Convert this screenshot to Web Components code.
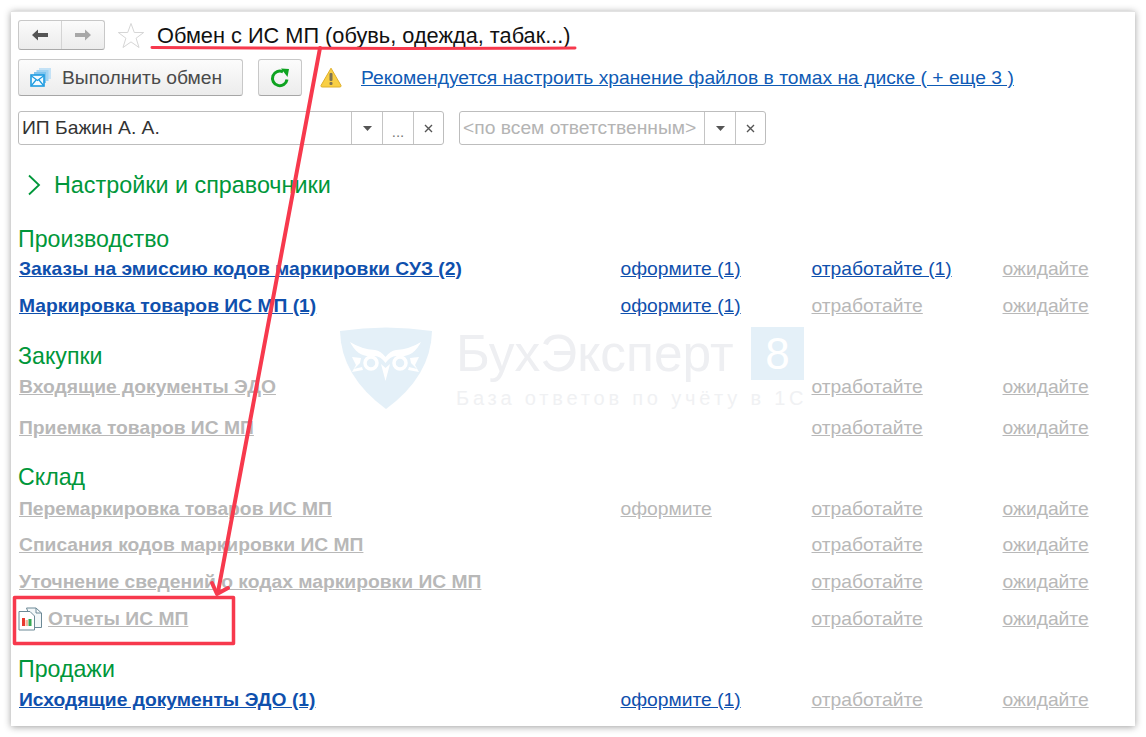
<!DOCTYPE html>
<html lang="ru">
<head>
<meta charset="utf-8">
<title>Обмен с ИС МП</title>
<style>
    html, body { margin: 0; background: #fff; }
    body { width: 1146px; height: 737px; overflow: hidden; font-family: "Liberation Sans", Arial, sans-serif; }
</style>
</head>
<body>
<app-panel>
    <head-bar></head-bar>
    <action-bar></action-bar>
    <filter-bar></filter-bar>
    <group-toggle>Настройки и справочники</group-toggle>

    <section-head gap="30">Производство</section-head>
    <doc-row name="Заказы на эмиссию кодов маркировки СУЗ (2)" on a="оформите (1)" b="отработайте (1)"></doc-row>
    <doc-row gap="1" name="Маркировка товаров ИС МП (1)" on a="оформите (1)" b="отработайте" b-off></doc-row>

    <section-head gap="20">Закупки</section-head>
    <doc-row gap="1" name="Входящие документы ЭДО" b="отработайте" b-off></doc-row>
    <doc-row gap="5" name="Приемка товаров ИС МП" b="отработайте" b-off></doc-row>

    <section-head gap="19">Склад</section-head>
    <doc-row gap="2" name="Перемаркировка товаров ИС МП" a="оформите" a-off b="отработайте" b-off></doc-row>
    <doc-row name="Списания кодов маркировки ИС МП" b="отработайте" b-off></doc-row>
    <doc-row gap="1" name="Уточнение сведений о кодах маркировки ИС МП" b="отработайте" b-off></doc-row>
    <doc-row gap="1" icon name="Отчеты ИС МП" b="отработайте" b-off></doc-row>

    <section-head gap="20">Продажи</section-head>
    <doc-row gap="1" name="Исходящие документы ЭДО (1)" on a="оформите (1)" b="отработайте" b-off></doc-row>

    <water-mark></water-mark>
    <note-layer></note-layer>
</app-panel>

<script>
class AppPanel extends HTMLElement {
    constructor() {
        super();
        this.attachShadow({ mode: 'open' });
        this.shadowRoot.innerHTML = `
            <style>
                :host {
                    display: block;
                    position: relative;
                    box-sizing: border-box;
                    width: 1124px;
                    height: 715px;
                    margin: 11px 0 0 11px;
                    padding: 8px 7px 0 7px;
                    background: #fff;
                    border-top: 1px solid #e2e2e2;
                    box-shadow: 0 1px 7px rgba(0,0,0,0.38);
                }
            </style>
            <slot></slot>
        `;
    }
}

class HeadBar extends HTMLElement {
    constructor() {
        super();
        this.attachShadow({ mode: 'open' });
        this.shadowRoot.innerHTML = `
            <style>
                :host { display: flex; align-items: center; height: 30px; }
                #nav {
                    display: flex;
                    box-sizing: border-box;
                    width: 87px;
                    height: 30px;
                    border: 1px solid #c8c8c8;
                    border-bottom-color: #a9a9a9;
                    border-radius: 3px;
                    background: linear-gradient(#fbfbfb, #ececec);
                }
                #nav div { flex: 1; display: flex; align-items: center; justify-content: center; }
                #nav div + div { border-left: 1px solid #d4d4d4; }
                #star { margin: 2px 0 0 12px; display: block; }
                h1 {
                    margin: 2px 0 0 12px;
                    font: 400 21.750px "Liberation Sans", Arial, sans-serif;
                    color: #111;
                    white-space: nowrap;
                }
            </style>
            <div id="nav">
                <div><svg width="18" height="14" viewBox="0 0 18 14"><path d="M1 7l6-5.500v3.500h10v4H7v3.500z" fill="#555"/></svg></div>
                <div><svg width="18" height="14" viewBox="0 0 18 14"><path d="M17 7l-6-5.500v3.500H1v4h10v3.500z" fill="#a8a8a8"/></svg></div>
            </div>
            <svg id="star" width="28" height="28" viewBox="0 0 28 28"><path d="M14 1.500l3.300 9h9.400l-7.600 5.700 2.900 9.300-8-5.600-8 5.600 2.900-9.300-7.600-5.700h9.400z" fill="#fff" stroke="#d6d6d6"/></svg>
            <h1>Обмен с ИС МП (обувь, одежда, табак...)</h1>
        `;
    }
}

class ActionBar extends HTMLElement {
    constructor() {
        super();
        this.attachShadow({ mode: 'open' });
        this.shadowRoot.innerHTML = `
            <style>
                :host { display: flex; align-items: center; height: 37px; margin-top: 9px; }
                button {
                    display: flex;
                    align-items: center;
                    box-sizing: border-box;
                    height: 37px;
                    padding: 0;
                    border: 1px solid #c8c8c8;
                    border-bottom-color: #a6a6a6;
                    border-radius: 3px;
                    background: linear-gradient(#fcfcfc, #ececec);
                    font: 19.270px "Liberation Sans", Arial, sans-serif;
                    color: #4a4a4a;
                }
                #run { width: 225px; padding-left: 11px; }
                #run span { margin-left: 11px; }
                #refresh { width: 44px; margin-left: 15px; justify-content: center; }
                #warn { margin-left: 18px; display: block; }
                a { margin-left: 19px; font-size: 19.270px; color: #0f5bb5; text-decoration: underline; white-space: nowrap; }
            </style>
            <button id="run">
                <svg width="21" height="19" viewBox="0 0 21 19">
                    <rect x="9" y="0" width="12" height="11" fill="#c4e2f6"/>
                    <rect x="6.500" y="2" width="12" height="11" fill="#a2d4f3"/>
                    <rect x="4" y="4" width="12" height="11" fill="#7fc4ee"/>
                    <rect x="1" y="7" width="13" height="11" fill="#f4fbff" stroke="#1d9be0" stroke-width="1.600"/>
                    <path d="M1.500 8l6 4.500 6-4.500M1.500 17.500l4.500-5.500M13.500 17.500l-4.500-5.500" fill="none" stroke="#1d9be0" stroke-width="1.200"/>
                </svg>
                <span>Выполнить обмен</span>
            </button>
            <button id="refresh">
                <svg width="20" height="20" viewBox="0 0 20 20">
                    <path d="M17 11.500A7.300 7.300 0 1 1 13 3.800" fill="none" stroke="#0ea320" stroke-width="3"/>
                    <path d="M11 0.500l8 0.500-1.500 8z" fill="#0ea320"/>
                </svg>
            </button>
            <svg id="warn" width="22" height="21" viewBox="0 0 22 21">
                <path d="M11 1.200L21 18.500q.4 1.500-1.200 1.500H2.200q-1.600 0-1.200-1.500z" fill="#f8cf45" stroke="#e0b02a" stroke-linejoin="round"/>
                <rect x="9.500" y="6" width="3" height="8" rx="1" fill="#7d7355"/>
                <rect x="9.500" y="15" width="3" height="3" rx="1" fill="#7d7355"/>
            </svg>
            <a>Рекомендуется настроить хранение файлов в томах на диске ( + еще 3 )</a>
        `;
    }
}

class FilterBar extends HTMLElement {
    constructor() {
        super();
        this.attachShadow({ mode: 'open' });
        this.shadowRoot.innerHTML = `
            <style>
                :host { display: flex; gap: 15px; margin-top: 15px; }
            </style>
            <combo-field style="width:426px" value="ИП Бажин А. А." more></combo-field>
            <combo-field style="width:307px" value="&lt;по всем ответственным&gt;" empty></combo-field>
        `;
    }
}

class ComboField extends HTMLElement {
    constructor() {
        super();
        this.attachShadow({ mode: 'open' });
        const more = this.hasAttribute('more') ? `<div class="btn dots">...</div>` : '';
        this.shadowRoot.innerHTML = `
            <style>
                :host {
                    display: flex;
                    box-sizing: border-box;
                    height: 34px;
                    border: 1px solid #bdbdbd;
                    border-radius: 3px;
                    background: #fff;
                    font-size: 19.270px;
                    color: #333;
                }
                #val { flex: 1; min-width: 0; padding-left: 3px; line-height: 32px; white-space: nowrap; overflow: hidden; }
                :host([empty]) #val { color: #b4b4b4; }
                .btn {
                    box-sizing: border-box;
                    width: 31px;
                    border-left: 1px solid #c4c4c4;
                    display: flex;
                    align-items: center;
                    justify-content: center;
                    color: #777;
                }
                .btn:last-child { width: 30px; }
                .dots { font-size: 15px; padding-top: 7px; }
            </style>
            <div id="val"></div>
            <div class="btn"><svg width="9" height="5" viewBox="0 0 9 5"><path d="M0 0h9L4.500 5z" fill="#555"/></svg></div>
            ${more}
            <div class="btn"><svg width="9" height="9" viewBox="0 0 9 9"><path d="M1 1l7 7M8 1L1 8" stroke="#555" stroke-width="1.400"/></svg></div>
        `;
        this.shadowRoot.querySelector('#val').textContent = this.getAttribute('value');
    }
}

class GroupToggle extends HTMLElement {
    constructor() {
        super();
        this.attachShadow({ mode: 'open' });
        this.shadowRoot.innerHTML = `
            <style>
                :host {
                    display: flex;
                    align-items: center;
                    height: 24px;
                    margin-top: 28px;
                    padding-left: 9px;
                    font-size: 23.350px;
                    color: #00973a;
                }
                svg { margin-right: 13px; display: block; }
            </style>
            <svg width="14" height="22" viewBox="0 0 14 22"><path d="M2 1.500L12 11 2 20.500" fill="none" stroke="#00973a" stroke-width="1.800"/></svg>
            <slot></slot>
        `;
    }
}

class SectionHead extends HTMLElement {
    constructor() {
        super();
        this.attachShadow({ mode: 'open' });
        const gap = this.getAttribute('gap') || 0;
        this.shadowRoot.innerHTML = `
            <style>
                :host {
                    display: block;
                    height: 24px;
                    margin-top: ${gap}px;
                    font-size: 23.200px;
                    line-height: 24px;
                    color: #00973a;
                }
            </style>
            <slot></slot>
        `;
    }
}

class DocRow extends HTMLElement {
    constructor() {
        super();
        this.attachShadow({ mode: 'open' });
        const att = n => this.getAttribute(n);
        const icon = this.hasAttribute('icon') ? `
            <svg width="24" height="24" viewBox="0 0 24 24">
                <path d="M8.500 1h9.500l5.500 5v14.500H16z" fill="#f3f7f9" stroke="#6c8996"/>
                <path d="M18 1v5h5.500" fill="none" stroke="#6c8996"/>
                <path d="M1 4.500h11l4.500 4.500v14H1z" fill="#fff" stroke="#6c8996"/>
                <rect x="4" y="11" width="3" height="8" fill="#e8392e"/>
                <rect x="7.500" y="13" width="2.500" height="6" fill="#f4b9a0"/>
                <rect x="10.500" y="12" width="3" height="7" fill="#34a853"/>
            </svg>` : '';
        this.shadowRoot.innerHTML = `
            <style>
                :host {
                    display: grid;
                    grid-template-columns: 601.500px 191px 191px auto;
                    align-items: center;
                    height: 36px;
                    margin-top: ${att('gap') || 0}px;
                    padding-left: 1px;
                    font-size: 19.270px;
                    color: #b8b8b8;
                    white-space: nowrap;
                }
                #name { display: flex; align-items: center; font-weight: 700; }
                #name svg { margin: 0 6px 0 -1px; }
                a { text-decoration: underline; }
                .on { color: #0f50ad; }
                .off { color: #b8b8b8; }
            </style>
            <div id="name">${icon}<a class="${this.hasAttribute('on') ? 'on' : 'off'}">${att('name')}</a></div>
            <div><a class="${this.hasAttribute('a-off') ? 'off' : 'on'}">${att('a') || ''}</a></div>
            <div><a class="${this.hasAttribute('b-off') ? 'off' : 'on'}">${att('b') || ''}</a></div>
            <div><a class="off">ожидайте</a></div>
        `;
    }
}

class WaterMark extends HTMLElement {
    constructor() {
        super();
        this.attachShadow({ mode: 'open' });
        this.shadowRoot.innerHTML = `
            <style>
                :host {
                    position: absolute;
                    left: 328px;
                    top: 314px;
                    width: 470px;
                    height: 86px;
                    pointer-events: none;
                }
                svg { position: absolute; left: 0; top: 0; }
                #t1 { position: absolute; left: 117px; top: 1px; font-size: 51.500px; line-height: 52px; color: #eeeff2; white-space: nowrap; }
                #t2 { position: absolute; left: 117px; top: 60px; font-size: 20px; line-height: 24px; letter-spacing: 3.800px; color: #f0f1f3; white-space: nowrap; }
                #eight {
                    position: absolute;
                    left: 412px;
                    top: 1px;
                    width: 53px;
                    height: 53px;
                    background: #e4f0f8;
                    color: #fff;
                    font-size: 44px;
                    line-height: 53px;
                    text-align: center;
                }
            </style>
            <svg width="94" height="84" viewBox="0 0 94 84">
                <path d="M1 5Q47-2 93 5 92 50 47 83 2 50 1 5z" fill="#e4f0f8"/>
                <path d="M11 16Q22 23 36 24 42 25 46.500 31 51 25 57 24 71 23 82 16 74 32 59 30 52 29 46.500 37 41 29 34 30 19 32 11 16z" fill="#fff"/>
                <circle cx="32" cy="37" r="6" fill="none" stroke="#fff" stroke-width="3.500"/>
                <circle cx="61" cy="37" r="6" fill="none" stroke="#fff" stroke-width="3.500"/>
                <path d="M42 38L46.500 55 51 38 46.500 42z" fill="#fff"/>
                <path d="M13 31l9 1-1 5-6 6 8-2 1 3-11 2 4-7zM80 31l-9 1 1 5 6 6-8-2-1 3 11 2-4-7z" fill="#fff"/>
            </svg>
            <div id="t1">БухЭксперт</div>
            <div id="eight">8</div>
            <div id="t2">База ответов по учёту в 1С</div>
        `;
    }
}

class NoteLayer extends HTMLElement {
    constructor() {
        super();
        this.attachShadow({ mode: 'open' });
        this.shadowRoot.innerHTML = `
            <style>
                :host { position: absolute; left: -11px; top: -12px; width: 1146px; height: 737px; pointer-events: none; }
                svg { display: block; }
            </style>
            <svg width="1146" height="737" viewBox="0 0 1146 737" fill="none" stroke="#f7394d" stroke-linecap="round" stroke-linejoin="round">
                <path d="M152 47.500Q360 49 575 48" stroke-width="3"/>
                <path d="M320 48L218 592" stroke-width="4"/>
                <path d="M212 583L217 594 228 588" stroke-width="4"/>
                <rect x="14.500" y="597.500" width="219" height="46" stroke-width="3.500"/>
            </svg>
        `;
    }
}

customElements.define('app-panel', AppPanel);
customElements.define('head-bar', HeadBar);
customElements.define('action-bar', ActionBar);
customElements.define('filter-bar', FilterBar);
customElements.define('combo-field', ComboField);
customElements.define('group-toggle', GroupToggle);
customElements.define('section-head', SectionHead);
customElements.define('doc-row', DocRow);
customElements.define('water-mark', WaterMark);
customElements.define('note-layer', NoteLayer);
</script>
</body>
</html>
